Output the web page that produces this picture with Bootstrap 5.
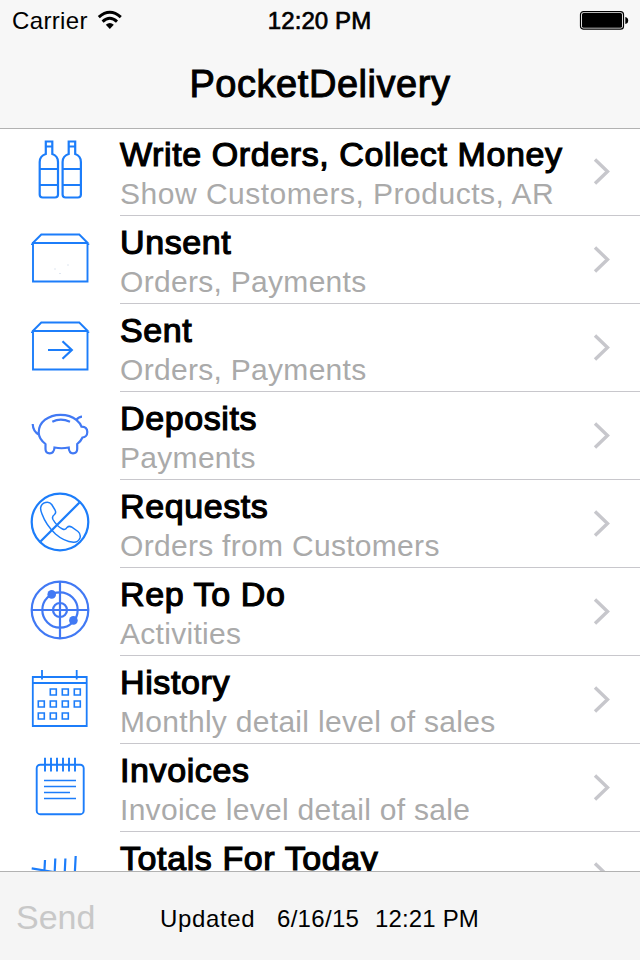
<!DOCTYPE html>
<html lang="en">
<head>
<meta charset="utf-8">
<meta name="viewport" content="width=device-width, initial-scale=1">
<title>PocketDelivery</title>
<link href="https://cdn.jsdelivr.net/npm/bootstrap@5.3.0/dist/css/bootstrap.min.css" rel="stylesheet">
<style>
  body { font-family: "Liberation Sans", Arial, sans-serif; color: #000; background: #fff; }
  .app-screen { width: 640px; height: 960px; }
  .app-head { height: 129px; background: #f7f7f7; border-bottom: 1px solid #b2b2b2; }
  .status-row { height: 40px; padding: 0 11px 0 12px; font-size: 24px; line-height: 40px; }
  .status-row > * { flex: 1 1 0; }
  .status-name, .status-time { padding-top: 2px; }
  .status-name { letter-spacing: .35px; }
  .status-time { letter-spacing: .1px; -webkit-text-stroke: .7px #000; margin-left: -2px; }
  .app-title { font-size: 38px; line-height: 89px; letter-spacing: .55px; -webkit-text-stroke: 1px #000; }
  .menu-list { margin-top: -1px; }
  .menu-row { height: 88px; }
  .menu-row .pic { width: 120px; height: 88px; fill: none; stroke: #1c7dfa; stroke-width: 2.2; }
  .menu-row .pic.violet { stroke: #4179f4; }
  .menu-body { border-bottom: 1px solid #c8c7cc; }
  .menu-title { font-size: 34px; line-height: 38px; padding-top: 7px; letter-spacing: .6px; -webkit-text-stroke: 1.2px #000; }
  .menu-sub { font-size: 30px; line-height: 34px; padding-top: 4px; color: #aaa; letter-spacing: .3px; }
  .menu-sub.loose { letter-spacing: .5px; }
  .chev { width: 50px; height: 87px; fill: none; stroke: #c7c7cc; stroke-width: 3.4; }
  .app-foot { height: 89px; background: #f5f5f5; border-top: 1px solid #b2b2b2; line-height: 94px; padding-left: 16px; font-size: 24px; }
  .send-btn, .send-btn:disabled { font-size: 34px; width: 144px; color: #c8c8c8; line-height: 90px; opacity: 1; }
  .foot-name { width: 117px; letter-spacing: .65px; }
  .foot-date { width: 98px; letter-spacing: .3px; }
  .foot-time { letter-spacing: .15px; }
</style>
</head>
<body>
<svg class="d-none"><symbol id="chevron" viewBox="590 0 50 87"><path d="M595 31.500 607.500 43.500 595 55.500"/></symbol></svg>
<div class="app-screen d-flex flex-column overflow-hidden">
  <header class="app-head flex-shrink-0">
    <div class="status-row d-flex align-items-center">
      <div class="d-flex align-items-center"><span class="status-name">Carrier</span>
        <svg class="ms-2" width="28" height="22" viewBox="1.200 0 28 22"><g fill="none" stroke="#000" stroke-width="3"><path d="M4 8.200Q15 -1.600 26 8.200"/><path d="M7.800 12.600Q15 6 22.200 12.600"/></g><path d="M11 15.800Q15 12.300 19 15.800L15 20Z"/></svg>
      </div>
      <div class="text-center"><span class="status-time d-inline-block">12:20 PM</span></div>
      <div class="d-flex justify-content-end"><svg width="50" height="20" viewBox="0 0 50 20"><rect x="1.500" y="1.600" width="43" height="17.600" rx="3" fill="none" stroke="#000" stroke-width="1.200"/><rect x="3" y="3.100" width="40" height="14.600" rx="1.500"/><path d="M46.300 7Q49.200 7.500 49.200 10.500T46.300 14Z"/></svg></div>
    </div>
    <h1 class="app-title text-center fw-normal m-0">PocketDelivery</h1>
  </header>
  <main class="menu-list flex-grow-1 overflow-hidden">
    <div class="menu-row d-flex">
      <svg class="pic flex-shrink-0" viewBox="0 0 120 88"><g id="bottle"><path d="M45.800 13.500h6.500V26q5.700 2 5.700 8v32.500q0 3-3 3H42.700q-3 0-3-3V34q0-6 6.100-8ZM45.800 18.500h6.500M39.700 41H58M39.700 57H58"/></g><use href="#bottle" x="22.900"/></svg>
      <div class="menu-body flex-grow-1 d-flex"><div class="flex-grow-1"><div class="menu-title">Write Orders, Collect Money</div><div class="menu-sub loose">Show Customers, Products, AR</div></div><svg class="chev"><use href="#chevron"/></svg></div>
    </div>
    <div class="menu-row d-flex">
      <svg class="pic flex-shrink-0" viewBox="0 0 120 88"><path id="box" stroke-width="1.900" d="M32.300 27.500 41.300 18.500H79.300L88.200 27.500M33 27V65.500H87.500V27ZM32 27.500V29M88.300 27.500V29"/><path stroke="#dfe6f0" stroke-width="1" d="M54 53h2M59 57.500h2M67 49h2"/></svg>
      <div class="menu-body flex-grow-1 d-flex"><div class="flex-grow-1"><div class="menu-title">Unsent</div><div class="menu-sub">Orders, Payments</div></div><svg class="chev"><use href="#chevron"/></svg></div>
    </div>
    <div class="menu-row d-flex">
      <svg class="pic flex-shrink-0" viewBox="0 0 120 88"><use href="#box"/><path d="M48 46H71.500M62.500 37.300 71.800 46 62.500 54.700"/></svg>
      <div class="menu-body flex-grow-1 d-flex"><div class="flex-grow-1"><div class="menu-title">Sent</div><div class="menu-sub">Orders, Payments</div></div><svg class="chev"><use href="#chevron"/></svg></div>
    </div>
    <div class="menu-row d-flex">
      <svg class="pic violet flex-shrink-0" viewBox="0 0 120 88"><path d="M32.700 32Q33 39.500 39 42.700M45.500 52C41 48.500 38.700 45 38.700 40.500C38.700 30 48.500 22.800 60.500 22.800C67 22.800 72.500 24.500 76.300 27.800Q79 24.600 82 24.600M76.300 27.800Q80.300 31 81.500 34.700C85.500 34.800 87.300 37 87.300 40C87.300 43.500 85 45.500 82.500 45.500Q81 49 77.200 52V57Q77.200 61.300 73 61.300Q69 61.300 68.700 55.500Q61.500 57 54.500 55.500Q54 61.300 49.700 61.300Q45.500 61.300 45.500 57V51.500M52.300 29.700Q60.500 25.500 70 29.700"/></svg>
      <div class="menu-body flex-grow-1 d-flex"><div class="flex-grow-1"><div class="menu-title">Deposits</div><div class="menu-sub">Payments</div></div><svg class="chev"><use href="#chevron"/></svg></div>
    </div>
    <div class="menu-row d-flex">
      <svg class="pic flex-shrink-0" viewBox="0 0 120 88"><circle cx="60" cy="42" r="28.300"/><path d="M79.500 22.500 40.500 61.500"/><path stroke-width="1.500" d="M40.700 27.500Q41.500 23.500 45.500 22.500Q49.500 21.500 51.700 24.500L55 30Q56.500 32.700 54.500 34.500Q51.500 36.500 53 39.500Q57 46.500 62.500 49Q65.500 50.300 67 47.500Q69 45.500 71.500 47L78 51.500Q81 54 80 58Q78 62.500 73.500 62.300Q64 61.500 55.500 54Q46 45 42 34Q40.300 30 40.700 27.500Z"/></svg>
      <div class="menu-body flex-grow-1 d-flex"><div class="flex-grow-1"><div class="menu-title">Requests</div><div class="menu-sub">Orders from Customers</div></div><svg class="chev"><use href="#chevron"/></svg></div>
    </div>
    <div class="menu-row d-flex">
      <svg class="pic violet flex-shrink-0" viewBox="0 0 120 88"><circle cx="60" cy="42" r="28.300"/><circle cx="60" cy="42" r="17.700"/><circle cx="60" cy="42" r="7"/><path d="M60 14V70M32 42H88"/><g fill="#4179f4" stroke="none"><circle cx="51.700" cy="26.400" r="4.300"/><circle cx="73.400" cy="52.400" r="4.300"/></g></svg>
      <div class="menu-body flex-grow-1 d-flex"><div class="flex-grow-1"><div class="menu-title">Rep To Do</div><div class="menu-sub">Activities</div></div><svg class="chev"><use href="#chevron"/></svg></div>
    </div>
    <div class="menu-row d-flex">
      <svg class="pic flex-shrink-0" viewBox="0 0 120 88"><path stroke-width="1.800" d="M32.800 21H86.700V70H32.800ZM32.800 27H86.700M42 14V23.500M76.700 14V23.500"/><path stroke-width="1.600" d="M50.300 33h6v6h-6ZM62.300 33h6v6h-6ZM74.300 33h6v6h-6ZM38.300 45h6v6h-6ZM50.300 45h6v6h-6ZM62.300 45h6v6h-6ZM74.300 45h6v6h-6ZM38.300 57h6v6h-6ZM50.300 57h6v6h-6ZM62.300 57h6v6h-6Z"/></svg>
      <div class="menu-body flex-grow-1 d-flex"><div class="flex-grow-1"><div class="menu-title">History</div><div class="menu-sub">Monthly detail level of sales</div></div><svg class="chev"><use href="#chevron"/></svg></div>
    </div>
    <div class="menu-row d-flex">
      <svg class="pic flex-shrink-0" viewBox="0 0 120 88"><rect x="36.700" y="20.700" width="47" height="49.500" rx="3.500" stroke-width="1.900"/><path stroke-width="1.900" d="M45 13.700V27.500M51 13.700V27.500M57 13.700V27.500M63 13.700V27.500M69 13.700V27.500M75 13.700V27.500"/><path stroke-width="1.600" d="M44 36.500H76M44 42.500H76M44 48.500H70M44 54.500H76"/></svg>
      <div class="menu-body flex-grow-1 d-flex"><div class="flex-grow-1"><div class="menu-title">Invoices</div><div class="menu-sub">Invoice level detail of sale</div></div><svg class="chev"><use href="#chevron"/></svg></div>
    </div>
    <div class="menu-row d-flex">
      <svg class="pic flex-shrink-0" viewBox="0 0 120 88"><path d="M45 28 43 66M55.300 26.500 53.500 66M65.400 26.500 63.500 66M75.700 24 73.500 66M31.700 36.300 88 46"/></svg>
      <div class="menu-body flex-grow-1 d-flex"><div class="flex-grow-1"><div class="menu-title">Totals For Today</div></div><svg class="chev"><use href="#chevron"/></svg></div>
    </div>
  </main>
  <footer class="app-foot flex-shrink-0 d-flex">
    <button class="send-btn btn border-0 rounded-0 p-0 text-start" disabled>Send</button>
    <span class="foot-name">Updated</span><span class="foot-date">6/16/15</span><span class="foot-time">12:21 PM</span>
  </footer>
</div>
<script src="https://cdn.jsdelivr.net/npm/bootstrap@5.3.0/dist/js/bootstrap.bundle.min.js"></script>
</body>
</html>
